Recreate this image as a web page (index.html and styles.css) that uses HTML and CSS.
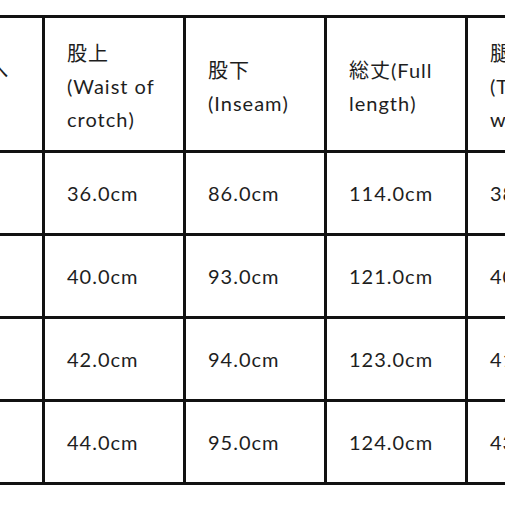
FILE: index.html
```html
<!DOCTYPE html>
<html lang="ja">
<head>
<meta charset="utf-8">
<link rel="stylesheet" href="styles.css">
</head>
<body>
<div class="sheet">
  <div class="cell head">サイズへ<br>(Size)</div>
  <div class="cell head">股上<br>(Waist of<br>crotch)</div>
  <div class="cell head">股下<br>(Inseam)</div>
  <div class="cell head">総丈(Full<br>length)</div>
  <div class="cell head">腿围<br>(Thigh<br>width)</div>

  <div class="cell">S</div>
  <div class="cell">36.0cm</div>
  <div class="cell">86.0cm</div>
  <div class="cell">114.0cm</div>
  <div class="cell">38.0cm</div>

  <div class="cell">M</div>
  <div class="cell">40.0cm</div>
  <div class="cell">93.0cm</div>
  <div class="cell">121.0cm</div>
  <div class="cell">40.0cm</div>

  <div class="cell">L</div>
  <div class="cell">42.0cm</div>
  <div class="cell">94.0cm</div>
  <div class="cell">123.0cm</div>
  <div class="cell">41.0cm</div>

  <div class="cell">XL</div>
  <div class="cell">44.0cm</div>
  <div class="cell">95.0cm</div>
  <div class="cell">124.0cm</div>
  <div class="cell">43.0cm</div>
</div>
</body>
</html>
```
FILE: styles.css
```css
html, body {
  margin: 0;
  padding: 0;
  background: #ffffff;
  overflow: hidden;
  width: 505px;
  height: 505px;
}

body {
  font-family: Lato, "Noto Sans CJK JP", sans-serif;
  color: #1e1e1e;
  font-size: 20px;
  letter-spacing: 1px;
}

.sheet {
  display: grid;
  grid-template-columns: repeat(5, 138px);
  grid-template-rows: 132px repeat(4, 80px);
  gap: 3px;
  padding: 3px;
  background: #111111;
  width: max-content;
  margin-top: 15px;
  margin-left: -99px;
}

.cell {
  background: #ffffff;
  padding: 0 10px 0 22px;
  display: flex;
  align-items: center;
  line-height: 33px;
  white-space: nowrap;
}

.head {
  padding-top: 5px;
}
```
